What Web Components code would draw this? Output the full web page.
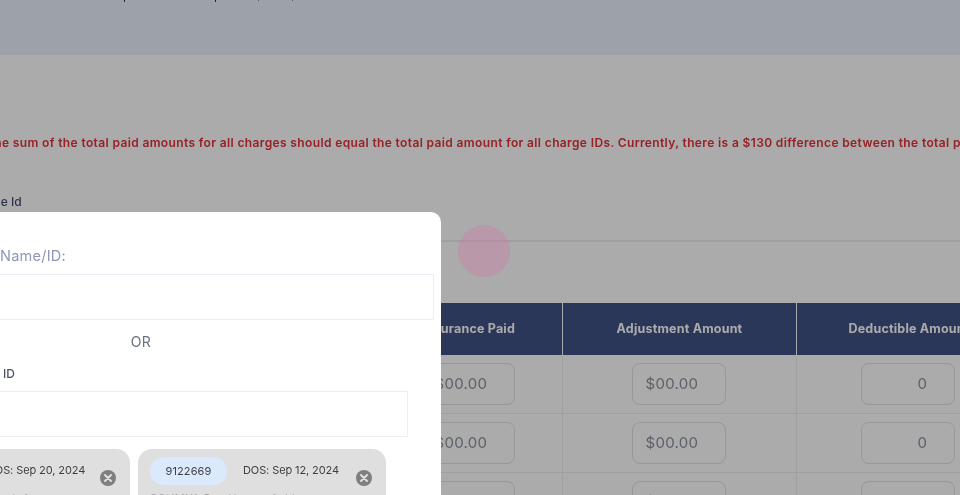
<!DOCTYPE html>
<html>
<head>
<meta charset="utf-8">
<style>
  html, body { margin: 0; padding: 0; background: #fff; }
  body { font-family: "Inter", "Liberation Sans", sans-serif; }
</style>
</head>
<body>
<app-stage>
  <top-banner></top-banner>
  <charge-page></charge-page>
  <pick-modal slot="modal">
    <charge-card pill="9130412" dos="DOS: Sep 20, 2024" who="Ashley Jordan  Pollard, Ann"></charge-card>
    <charge-card pill="9122669" dos="DOS: Sep 12, 2024" who="SOUMYA Rao  Hanna, Ashley"></charge-card>
  </pick-modal>
</app-stage>

<script>
class AppStage extends HTMLElement {
    constructor() {
        super();
        const shadow = this.attachShadow({ mode: 'open' });
        shadow.innerHTML = `
            <style>
                :host {
                    display: block;
                    position: relative;
                    width: 960px;
                    height: 495px;
                    overflow: hidden;
                    background: #fff;
                }
                .soft { filter: blur(0.45px); height: 100%; }
                .overlay {
                    position: absolute;
                    inset: 0;
                    background: rgba(0, 0, 0, 0.33);
                }
                .click {
                    position: absolute;
                    left: 458px;
                    top: 225px;
                    width: 52px;
                    height: 52px;
                    border-radius: 50%;
                    background: rgba(220, 110, 165, 0.3);
                }
            </style>
            <div class="soft">
                <slot></slot>
                <div class="overlay"></div>
                <div class="click"></div>
                <slot name="modal"></slot>
            </div>
        `;
    }
}

class TopBanner extends HTMLElement {
    constructor() {
        super();
        const shadow = this.attachShadow({ mode: 'open' });
        shadow.innerHTML = `
            <style>
                :host {
                    display: block;
                    position: relative;
                    height: 55px;
                    background: #ebf0fb;
                }
                i { position: absolute; top: 0; width: 1px; height: 2px; background: #333; }
                i.light { background: #888; height: 1px; }
            </style>
            <i style="left:124px"></i>
            <i style="left:215px"></i>
            <i class="light" style="left:258px"></i>
            <i class="light" style="left:292px"></i>
        `;
    }
}

class ChargePage extends HTMLElement {
    constructor() {
        super();
        const shadow = this.attachShadow({ mode: 'open' });
        shadow.innerHTML = `
            <style>
                :host { display: block; background: #fff; height: 440px; overflow: hidden; }
                .msg {
                    margin: 78px 0 0 -14px;
                    height: 20px;
                    line-height: 20px;
                    font-size: 12px;
                    font-weight: 600;
                    letter-spacing: 0.37px;
                    color: #e0323a;
                    white-space: nowrap;
                }
                .label {
                    margin: 40px 0 0 -34px;
                    height: 18px;
                    line-height: 18px;
                    font-size: 12px;
                    font-weight: 500;
                    color: #444f70;
                }
                .line { margin-top: 29px; height: 2px; background: #eeeeee; }
                charge-table { margin: 61px 0 0 375px; }
            </style>
            <div class="msg">The sum of the total paid amounts for all charges should equal the total paid amount for all charge IDs. Currently, there is a $130 difference between the total paid amount</div>
            <div class="label">Charge Id</div>
            <div class="line"></div>
            <charge-table></charge-table>
        `;
    }
}

class ChargeTable extends HTMLElement {
    constructor() {
        super();
        const shadow = this.attachShadow({ mode: 'open' });
        const row = `
            <div class="cell"><input-box value="$00.00"></input-box></div>
            <div class="cell"><input-box value="$00.00"></input-box></div>
            <div class="cell"><input-box value="0" num></input-box></div>
        `;
        shadow.innerHTML = `
            <style>
                :host { display: block; width: 650px; }
                .grid {
                    display: grid;
                    grid-template-columns: 188px 234px 228px;
                    grid-auto-rows: 59px;
                }
                .head {
                    height: 52px;
                    padding-bottom: 2px;
                    background: #405285;
                    color: #fff;
                    font-size: 12.5px;
                    font-weight: 700;
                    letter-spacing: 0.2px;
                    display: flex;
                    align-items: center;
                    justify-content: center;
                    white-space: nowrap;
                    border-right: 1px solid #fff;
                    box-sizing: border-box;
                }
                .cell {
                    display: flex;
                    align-items: center;
                    justify-content: center;
                    border-right: 1px solid #eeeff2;
                    border-bottom: 1px solid #eeeff2;
                    box-sizing: border-box;
                    padding: 0 2px 1px 0;
                }
                .head:nth-child(3) { border-right: 0; padding-right: 4px; }
                .cell:nth-child(3n) { border-right: 0; padding-right: 7px; }
            </style>
            <div class="grid" style="grid-auto-rows:52px">
                <div class="head">Insurance Paid</div>
                <div class="head">Adjustment Amount</div>
                <div class="head">Deductible Amount</div>
            </div>
            <div class="grid">${row}${row}${row}</div>
        `;
    }
}

class InputBox extends HTMLElement {
    constructor() {
        super();
        const shadow = this.attachShadow({ mode: 'open' });
        shadow.innerHTML = `
            <style>
                :host {
                    display: block;
                    width: 94px;
                    height: 42px;
                    box-sizing: border-box;
                    border: 1px solid #dfe2ea;
                    border-radius: 8px;
                    background: transparent;
                    font-size: 15px;
                    line-height: 40px;
                    letter-spacing: 0.3px;
                    color: #8a909c;
                    padding-left: 13px;
                }
                :host([num]) { padding-left: 56px; }
            </style>
            <span></span>
        `;
    }

    connectedCallback() {
        this.shadowRoot.querySelector('span').textContent = this.getAttribute('value');
    }
}

class PickModal extends HTMLElement {
    constructor() {
        super();
        const shadow = this.attachShadow({ mode: 'open' });
        shadow.innerHTML = `
            <style>
                :host {
                    display: block;
                    position: absolute;
                    left: -159px;
                    top: 212px;
                    width: 600px;
                    height: 400px;
                    background: #fff;
                    border-radius: 10px;
                    box-sizing: border-box;
                    padding-top: 34px;
                }
                .name {
                    width: 225px;
                    height: 20px;
                    line-height: 20px;
                    font-size: 14.5px;
                    letter-spacing: 0.25px;
                    color: #8f96b8;
                    text-align: right;
                    white-space: nowrap;
                }
                .field {
                    box-sizing: border-box;
                    border: 1.5px solid #eeeff6;
                    background: #fff;
                }
                .f1 { width: 586px; height: 46px; margin: 8px 0 0 7px; }
                .or {
                    margin-top: 12px;
                    height: 20px;
                    line-height: 20px;
                    text-align: center;
                    font-size: 14px;
                    letter-spacing: 0.3px;
                    color: #6b7280;
                }
                .id {
                    margin-top: 12px;
                    width: 174px;
                    height: 20px;
                    line-height: 20px;
                    font-size: 12px;
                    font-weight: 500;
                    color: #4b5563;
                    text-align: right;
                    white-space: nowrap;
                }
                .f2 { width: 534px; height: 46px; margin: 7px 0 0 33px; }
                .cards { display: flex; gap: 8px; margin: 12px 0 0 41px; }
            </style>
            <div class="name">Search by Name/ID:</div>
            <div class="field f1"></div>
            <div class="or">OR</div>
            <div class="id">Charge ID</div>
            <div class="field f2"></div>
            <div class="cards"><slot></slot></div>
        `;
    }
}

class ChargeCard extends HTMLElement {
    constructor() {
        super();
        const shadow = this.attachShadow({ mode: 'open' });
        shadow.innerHTML = `
            <style>
                :host {
                    display: block;
                    position: relative;
                    width: 248px;
                    height: 90px;
                    box-sizing: border-box;
                    padding: 8px 12px;
                    background: #dfdfdf;
                    border-radius: 14px;
                }
                .top { display: flex; align-items: center; height: 28px; }
                .pill {
                    width: 77px;
                    height: 28px;
                    line-height: 28px;
                    border-radius: 14px;
                    background: #dbe9fd;
                    text-align: center;
                    font-size: 11px;
                    letter-spacing: 0.1px;
                    color: #3f3f46;
                }
                .dos {
                    margin: 0 0 2px 16px;
                    font-size: 11px;
                    letter-spacing: -0.1px;
                    color: #3f3f46;
                    white-space: nowrap;
                }
                .who {
                    margin-top: 6px;
                    font-size: 11px;
                    letter-spacing: 0.4px;
                    color: #a6a6a6;
                    white-space: nowrap;
                }
                svg { position: absolute; left: 218px; top: 21px; }
            </style>
            <div class="top">
                <div class="pill"></div>
                <div class="dos"></div>
            </div>
            <div class="who"></div>
            <svg width="16" height="16" viewBox="0 0 16 16">
                <circle cx="8" cy="8" r="8" fill="#7f7f7f"/>
                <path d="M5 5l6 6M11 5l-6 6" stroke="#dfdfdf" stroke-width="2" stroke-linecap="round"/>
            </svg>
        `;
    }

    connectedCallback() {
        this.shadowRoot.querySelector('.pill').textContent = this.getAttribute('pill');
        this.shadowRoot.querySelector('.dos').textContent = this.getAttribute('dos');
        this.shadowRoot.querySelector('.who').textContent = this.getAttribute('who');
    }
}

customElements.define('app-stage', AppStage);
customElements.define('top-banner', TopBanner);
customElements.define('charge-page', ChargePage);
customElements.define('charge-table', ChargeTable);
customElements.define('input-box', InputBox);
customElements.define('pick-modal', PickModal);
customElements.define('charge-card', ChargeCard);
</script>
</body>
</html>
